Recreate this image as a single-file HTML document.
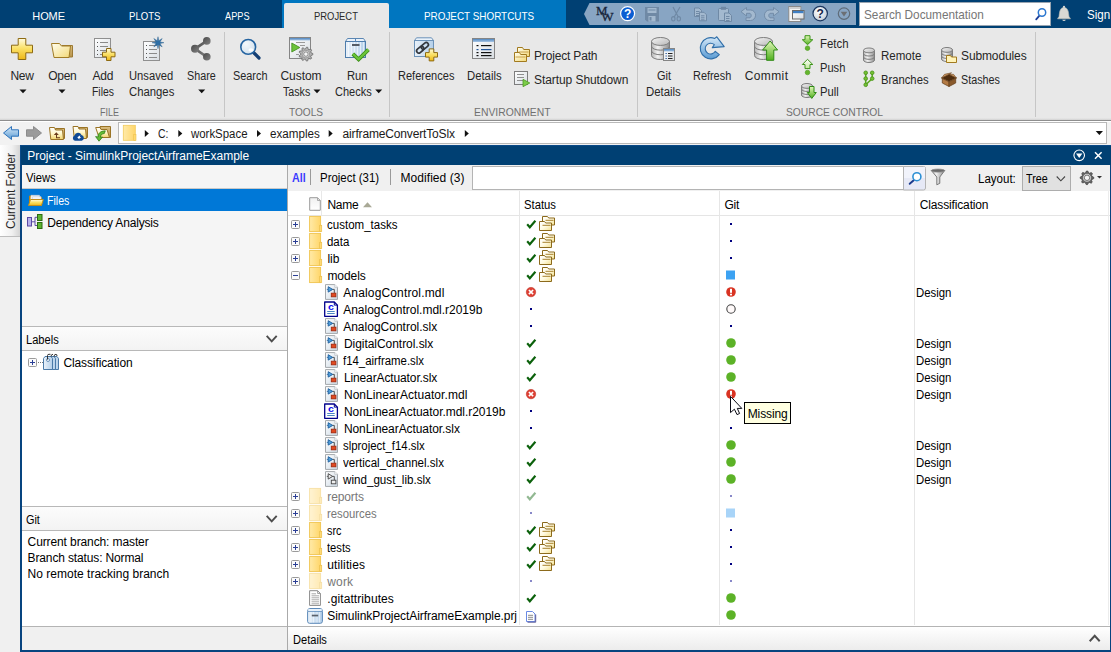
<!DOCTYPE html>
<html lang="en"><head><meta charset="utf-8"><title>Project - SimulinkProjectAirframeExample</title>
<style>
html,body{margin:0;padding:0}
body{width:1111px;height:652px;overflow:hidden;position:relative;background:#f0f0f0;font-family:"Liberation Sans",sans-serif;}
.b{position:absolute;box-sizing:border-box}
.x{position:absolute;transform-origin:0 50%;white-space:nowrap;line-height:16px;height:16px}
.i{position:absolute;overflow:visible}

.tab{font-size:11px;font-weight:400;color:#ffffff}
.tabsel{font-size:11px;font-weight:400;color:#2a2a2a}
.sdoc{font-size:13px;font-weight:400;color:#767676}
.sign{font-size:13px;font-weight:400;color:#ffffff}
.rb{font-size:12px;font-weight:400;color:#262626}
.sec{font-size:11px;font-weight:400;color:#707070}
.ad{font-size:12px;font-weight:400;color:#1a1a1a}
.ttl{font-size:12px;font-weight:400;color:#ffffff}
.t{font-size:12px;font-weight:400;color:#000000}
.tw{font-size:12px;font-weight:400;color:#ffffff}
.tg{font-size:12px;font-weight:400;color:#777777}
.all{font-size:12px;font-weight:700;color:#3a3aff}
.tip{font-size:12px;font-weight:400;color:#000000}
</style></head>
<body>
<div class="b" style="left:0;top:0;width:1111px;height:28px;background:#004073"></div>
<div class="b" style="left:282px;top:0;width:284px;height:28px;background:#0076c0"></div>
<div class="b" style="left:284px;top:3px;width:105px;height:25px;background:#e8e8e8;border-radius:2px 2px 0 0"></div>
<svg class="i" style="left:0;top:0" width="1111" height="28"><polygon points="584,14 589.500,3 856,3 856,25 589.500,25" fill="#88a5c3"/></svg>
<div class="b" style="left:859px;top:2px;width:192px;height:24px;background:#fff;border:1px solid #9aa5b1"></div>
<div class="b" style="left:0;top:28px;width:1111px;height:93px;background:linear-gradient(#e8e8e8 0,#e8e8e8 90px,#d2d2d2 92px);border-bottom:1px solid #8e8e8e"></div>
<div class="b" style="left:224px;top:32px;width:1px;height:85px;background:#c6c6c6"></div>
<div class="b" style="left:389px;top:32px;width:1px;height:85px;background:#c6c6c6"></div>
<div class="b" style="left:637px;top:32px;width:1px;height:85px;background:#c6c6c6"></div>
<div class="b" style="left:1035px;top:32px;width:1px;height:85px;background:#c6c6c6"></div>
<div class="b" style="left:0;top:121px;width:1111px;height:24px;background:#f2f2f2;border-top:1px solid #fff"></div>
<div class="b" style="left:118px;top:122px;width:989px;height:22px;background:#fff;border:1px solid #b9b9b9"></div>
<!-- current folder tab -->
<div class="b" style="left:0;top:145px;width:20px;height:92px;background:linear-gradient(90deg,#ffffff,#f0f0f0 60%,#d4d4d4);border-bottom:1px solid #bdbdbd"></div>
<div class="x rb" style="left:-30px;top:183px;width:82px;text-align:center;transform-origin:50% 50%;transform:rotate(-90deg) scaleX(.98);letter-spacing:0px">Current Folder</div>
<!-- panel -->
<div class="b" style="left:20px;top:145px;width:1092px;height:507px;background:#fff;border:2px solid #07447f;border-top:none"></div>
<div class="b" style="left:20px;top:145px;width:1091px;height:20px;background:#004073;border-top:1px solid #0a4a88;border-left:1px solid #0a4a88"></div>
<!-- left panel -->
<div class="b" style="left:22px;top:165px;width:265px;height:24px;background:#f5f5f5;border-bottom:1px solid #c8c8c8"></div>
<div class="b" style="left:22px;top:189px;width:265px;height:22px;background:#0078d7"></div>
<div class="b" style="left:22px;top:211px;width:265px;height:116px;background:#f5f5f5;border-bottom:1px solid #b8b8b8"></div>
<div class="b" style="left:22px;top:327px;width:265px;height:24px;background:linear-gradient(#fcfcfc,#f3f3f3);border-bottom:1px solid #b8b8b8"></div>
<div class="b" style="left:22px;top:506px;width:265px;height:25px;background:linear-gradient(#fcfcfc,#f3f3f3);border-top:1px solid #b8b8b8;border-bottom:1px solid #b8b8b8"></div>
<div class="b" style="left:22px;top:626px;width:265px;height:24px;background:#f0f0f0;border-top:1px solid #b4b4b4"></div>
<div class="b" style="left:287px;top:165px;width:1px;height:485px;background:#aaaaaa"></div>
<!-- right -->
<div class="b" style="left:288px;top:165px;width:822px;height:26px;background:#f0f0f0"></div>
<div class="b" style="left:472px;top:166px;width:432px;height:24px;background:#fff;border:1px solid #b4b4b4"></div>
<div class="b" style="left:288px;top:191px;width:822px;height:25px;background:#fff;border-bottom:1px solid #e5e5e5"></div>
<div class="b" style="left:321px;top:191px;width:1px;height:24px;background:#e8e8e8"></div>
<div class="b" style="left:310px;top:169px;width:1px;height:16px;background:#9a9a9a"></div>
<div class="b" style="left:390px;top:169px;width:1px;height:16px;background:#9a9a9a"></div>
<div class="b" style="left:519px;top:191px;width:1px;height:434px;background:#e6e6e6"></div>
<div class="b" style="left:719px;top:191px;width:1px;height:434px;background:#e6e6e6"></div>
<div class="b" style="left:914px;top:191px;width:1px;height:434px;background:#e6e6e6"></div>
<div class="b" style="left:288px;top:626px;width:822px;height:24px;background:linear-gradient(#fff,#ececec);border-top:1px solid #b4b4b4"></div>
<div class="b" style="left:1022px;top:166px;width:49px;height:25px;background:#e1e1e1;border:1px solid #adadad"></div>
<div class="b" style="left:1108px;top:191px;width:1px;height:434px;background:#ececec"></div>
<!-- tooltip -->
<div class="b" style="left:744px;top:402px;width:47px;height:22px;background:#ffffe1;border:1px solid #000"></div>

<svg class="i" style="left:0;top:0" width="1111" height="652" viewBox="0 0 1111 652"><defs>
<linearGradient id="gY" x1="0" y1="0" x2="0" y2="1"><stop offset="0" stop-color="#fffbe0"/><stop offset=".45" stop-color="#fbe26a"/><stop offset="1" stop-color="#eeb818"/></linearGradient>
<linearGradient id="gF" x1="0" y1="0" x2="1" y2="1"><stop offset="0" stop-color="#fffef0"/><stop offset="1" stop-color="#f3d977"/></linearGradient>
<linearGradient id="gFb" x1="0" y1="0" x2="0" y2="1"><stop offset="0" stop-color="#d9bd80"/><stop offset="1" stop-color="#b8934a"/></linearGradient>
<linearGradient id="gD" x1="0" y1="0" x2="1" y2="1"><stop offset="0" stop-color="#ffffff"/><stop offset="1" stop-color="#d8dde2"/></linearGradient>
<linearGradient id="gC" x1="0" y1="0" x2="1" y2="0"><stop offset="0" stop-color="#b5b5b5"/><stop offset=".35" stop-color="#f2f2f2"/><stop offset="1" stop-color="#8e8e8e"/></linearGradient>
<linearGradient id="gCt" x1="0" y1="0" x2="1" y2="1"><stop offset="0" stop-color="#f4f4f4"/><stop offset="1" stop-color="#b8b8b8"/></linearGradient>
<linearGradient id="gG" x1="0" y1="0" x2="0" y2="1"><stop offset="0" stop-color="#e2f7b8"/><stop offset="1" stop-color="#4fb01e"/></linearGradient>
<linearGradient id="gG2" x1="0" y1="0" x2="0" y2="1"><stop offset="0" stop-color="#ffffff"/><stop offset="1" stop-color="#bfe89a"/></linearGradient>
<linearGradient id="gF2" x1="0" y1="0" x2="1" y2="1"><stop offset="0" stop-color="#ffffff"/><stop offset=".5" stop-color="#fffbe4"/><stop offset="1" stop-color="#f3e08e"/></linearGradient>
<linearGradient id="gDw" x1="0" y1="0" x2="0" y2="1"><stop offset="0" stop-color="#f0f0f0"/><stop offset="1" stop-color="#ffffff"/></linearGradient>
<linearGradient id="gB" x1="0" y1="0" x2="0" y2="1"><stop offset="0" stop-color="#d6e9f8"/><stop offset="1" stop-color="#5b9bd3"/></linearGradient>
<linearGradient id="gT" x1="0" y1="0" x2="0" y2="1"><stop offset="0" stop-color="#4f86c0"/><stop offset="1" stop-color="#a9c6e4"/></linearGradient>
<linearGradient id="gBox" x1="0" y1="0" x2="1" y2="0"><stop offset="0" stop-color="#eaf2fa"/><stop offset="1" stop-color="#b4cfe9"/></linearGradient>
<linearGradient id="gS" x1="0" y1="0" x2="1" y2="1"><stop offset="0" stop-color="#4a4a4a"/><stop offset="1" stop-color="#828282"/></linearGradient>
<radialGradient id="gH" cx=".4" cy=".35" r=".7"><stop offset="0" stop-color="#ffffff"/><stop offset="1" stop-color="#c4ccd6"/></radialGradient>
<radialGradient id="gL" cx=".35" cy=".3" r=".8"><stop offset="0" stop-color="#f4f8fb"/><stop offset="1" stop-color="#cfdfec"/></radialGradient>
<linearGradient id="gDm" x1="0" y1="0" x2="1" y2="1"><stop offset="0" stop-color="#ffffff"/><stop offset="1" stop-color="#cfdbe6"/></linearGradient>
<linearGradient id="gFv" x1="0" y1="0" x2="0" y2="1"><stop offset="0" stop-color="#ffffff"/><stop offset=".5" stop-color="#fff7cc"/><stop offset="1" stop-color="#f1d46c"/></linearGradient>
<linearGradient id="gFo" x1="0" y1="0" x2="1" y2="0"><stop offset="0" stop-color="#ffeaa8"/><stop offset="1" stop-color="#ffd66a"/></linearGradient>
</defs>
<polygon points="18.2,38.5 25.8,38.5 25.8,45.2 32.5,45.2 32.5,52.8 25.8,52.8 25.8,59.5 18.2,59.5 18.2,52.8 11.5,52.8 11.5,45.2 18.2,45.2" fill="url(#gY)" stroke="#8d6a12" stroke-width="1" stroke-linejoin="round"/>
<path d="M62,45.5 H72.5 V57 H60 Z" fill="url(#gFb)" stroke="#9c7a34" stroke-width="1"/>
<path d="M51.5,43.5 H59.5 L61.5,46 H70.5 L69,57.5 H54 Z" fill="url(#gF)" stroke="#a07b25" stroke-width="1" stroke-linejoin="round"/>
<rect x="94.5" y="38.5" width="16.0" height="19.0" fill="url(#gD)" stroke="#8f8f8f" stroke-width="1"/>
<rect x="100" y="42.0" width="8" height="1" fill="#8a8a8a"/>
<rect x="97" y="42.0" width="1" height="1" fill="#555"/>
<rect x="100" y="46.0" width="8" height="1" fill="#8a8a8a"/>
<rect x="97" y="46.0" width="1" height="1" fill="#555"/>
<rect x="100" y="50.0" width="8" height="1" fill="#8a8a8a"/>
<rect x="97" y="50.0" width="1" height="1" fill="#555"/>
<rect x="100" y="54.0" width="8" height="1" fill="#8a8a8a"/>
<rect x="97" y="54.0" width="1" height="1" fill="#555"/>
<polygon points="106.5,48.5 111.0,48.5 111.0,52.2 115.0,52.2 115.0,56.8 111.0,56.8 111.0,60.5 106.5,60.5 106.5,56.8 102.5,56.8 102.5,52.2 106.5,52.2" fill="url(#gY)" stroke="#8d6a12" stroke-width="1" stroke-linejoin="round"/>
<rect x="143.5" y="41.5" width="16.0" height="19.0" fill="url(#gD)" stroke="#8f8f8f" stroke-width="1"/>
<rect x="149" y="45.0" width="8" height="1" fill="#8a8a8a"/>
<rect x="146" y="45.0" width="1" height="1" fill="#555"/>
<rect x="149" y="49.0" width="8" height="1" fill="#8a8a8a"/>
<rect x="146" y="49.0" width="1" height="1" fill="#555"/>
<rect x="149" y="53.0" width="8" height="1" fill="#8a8a8a"/>
<rect x="146" y="53.0" width="1" height="1" fill="#555"/>
<rect x="149" y="57.0" width="8" height="1" fill="#8a8a8a"/>
<rect x="146" y="57.0" width="1" height="1" fill="#555"/>
<polygon points="158.0,36.7 158.8,40.7 162.2,38.5 160.0,41.9 164.0,42.7 160.0,43.5 162.2,46.9 158.8,44.7 158.0,48.7 157.2,44.7 153.8,46.9 156.0,43.5 152.0,42.7 156.0,41.9 153.8,38.5 157.2,40.7" fill="#2f6fa6" stroke="#245a8a" stroke-width=".4"/>
<path d="M206.8,40.8 L195,48.8 L206.8,56.8" fill="none" stroke="url(#gS)" stroke-width="2.6"/>
<circle cx="195" cy="48.8" r="4" fill="url(#gS)"/><circle cx="206.8" cy="40.9" r="3.8" fill="url(#gS)"/><circle cx="206.8" cy="56.8" r="3.8" fill="url(#gS)"/>
<path d="M253.5,52.5 L259,58" stroke="#143f74" stroke-width="3.2" stroke-linecap="round"/>
<circle cx="248.2" cy="46.9" r="7.4" fill="url(#gL)" stroke="#2463a0" stroke-width="1.6"/>
<ellipse cx="251" cy="50" rx="2.6" ry="1.8" fill="#ffffff" opacity=".9"/>
<rect x="289.5" y="37.5" width="21.0" height="21.0" fill="url(#gD)" stroke="#858585" stroke-width="1"/>
<rect x="290.0" y="38.0" width="20.0" height="2.5" fill="url(#gT)"/>
<polygon points="291.8,43 291.8,52 299.8,47.5" fill="#6cc33a" stroke="#3d8a1c" stroke-width=".8"/>
<rect x="296" y="42" width="9" height="1" fill="#9a9a9a"/><rect x="300" y="45" width="5" height="1" fill="#9a9a9a"/><rect x="296" y="54" width="3" height="1" fill="#9a9a9a"/>
<polygon points="312.88,53.54 312.87,54.76 311.01,55.51 310.69,56.37 311.60,58.16 310.81,59.09 308.91,58.46 308.10,58.92 307.66,60.87 306.46,61.08 305.40,59.38 304.49,59.21 302.90,60.42 301.84,59.80 302.13,57.82 301.54,57.11 299.53,57.01 299.13,55.86 300.62,54.52 300.62,53.60 299.15,52.24 299.58,51.10 301.58,51.03 302.18,50.33 301.93,48.34 302.99,47.73 304.57,48.97 305.48,48.82 306.56,47.13 307.76,47.35 308.17,49.31 308.97,49.78 310.89,49.19 311.66,50.13 310.72,51.90 311.03,52.77" fill="#b4b4b4" stroke="#6a6a6a" stroke-width=".8" stroke-linejoin="round"/>
<circle cx="305.9" cy="54.1" r="3.8000000000000003" fill="#d9d9d9" stroke="#6a6a6a" stroke-width=".5"/>
<circle cx="305.9" cy="54.1" r="2.2" fill="#f4f4f4" stroke="#6a6a6a" stroke-width=".7"/>
<path d="M345.5,41.5 L347.5,38.5 H363.5 L365.5,41.5 Z" fill="#eaf2fa" stroke="#5b86b3" stroke-width="1" stroke-linejoin="round"/>
<rect x="345.500" y="41.5" width="20" height="16" fill="url(#gBox)" stroke="#4f7dac" stroke-width="1"/>
<rect x="348" y="42" width="1" height="15" fill="#ffffff" opacity=".55"/>
<rect x="351" y="42" width="1" height="15" fill="#ffffff" opacity=".55"/>
<rect x="354" y="42" width="1" height="15" fill="#ffffff" opacity=".55"/>
<rect x="357" y="42" width="1" height="15" fill="#ffffff" opacity=".55"/>
<rect x="360" y="42" width="1" height="15" fill="#ffffff" opacity=".55"/>
<rect x="363" y="42" width="1" height="15" fill="#ffffff" opacity=".55"/>
<rect x="355" y="38.5" width="1" height="3" fill="#5b86b3"/>
<rect x="352" y="44" width="7.500" height="2" fill="#555c66"/>
<path d="M352.8,53.8 L358.6,59.3 L368.4,49.6" fill="none" stroke="#3b8d18" stroke-width="3.900" stroke-linejoin="miter"/>
<path d="M352.8,53.8 L358.6,59.3 L368.4,49.6" fill="none" stroke="#6cc63a" stroke-width="2.200" stroke-linejoin="miter"/>
<path d="M414.500,40.500 L416.500,37.800 H431.500 L433.500,40.500 Z" fill="#eaf2fa" stroke="#6c92b8" stroke-width="1" stroke-linejoin="round"/>
<rect x="414.500" y="40.500" width="19" height="16" fill="url(#gBox)" stroke="#6c92b8" stroke-width="1"/>
<g transform="rotate(-40 422.5 47.8)" fill="none" stroke="#33373d" stroke-width="1.7"><rect x="415.500" y="45.600" width="8" height="4.400" rx="2.200"/><rect x="421.500" y="45.600" width="8" height="4.400" rx="2.200"/></g>
<polygon points="429.2,48.9 433.8,48.9 433.8,52.6 437.5,52.6 437.5,57.1 433.8,57.1 433.8,60.9 429.2,60.9 429.2,57.1 425.5,57.1 425.5,52.6 429.2,52.6" fill="url(#gY)" stroke="#8d6a12" stroke-width="1" stroke-linejoin="round"/>
<rect x="472.5" y="38.5" width="22.0" height="20.0" fill="url(#gD)" stroke="#858585" stroke-width="1"/>
<rect x="473.0" y="39.0" width="21.0" height="3" fill="url(#gT)"/>
<rect x="481" y="45" width="10.500" height="1.200" fill="#111"/><rect x="476.500" y="45" width="2" height="1.200" fill="#111"/>
<rect x="481" y="49" width="10.500" height="1.200" fill="#23569a"/><rect x="476.500" y="49" width="2" height="1.200" fill="#23569a"/>
<rect x="481" y="52" width="10.500" height="1.200" fill="#111"/><rect x="476.500" y="52" width="2" height="1.200" fill="#111"/>
<rect x="481" y="55" width="10.500" height="1.200" fill="#111"/><rect x="476.500" y="55" width="2" height="1.200" fill="#111"/>
<path d="M517.5,56.5 V47.5 H522.5 L523.7,49.5 H529.5 V56.5 Z" fill="url(#gF)" stroke="#a27a1f" stroke-width="1" stroke-linejoin="round"/>
<path d="M518.5,52.0 H528.5" stroke="#c9a24a" stroke-width="1"/>
<path d="M514.5,61.5 V52.5 H519.5 L520.7,54.5 H526.5 V61.5 Z" fill="url(#gF)" stroke="#a27a1f" stroke-width="1" stroke-linejoin="round"/>
<path d="M515.5,57.0 H525.5" stroke="#c9a24a" stroke-width="1"/>
<rect x="514.5" y="71.5" width="13.0" height="13.0" fill="url(#gD)" stroke="#7d7d7d" stroke-width="1"/>
<rect x="517" y="74.0" width="7" height="1" fill="#8f8f8f"/>
<rect x="517" y="77.0" width="7" height="1" fill="#8f8f8f"/>
<rect x="517" y="80.0" width="7" height="1" fill="#8f8f8f"/>
<polygon points="523,79.300 523,86.700 529.800,83" fill="#7ccc48" stroke="#4a9a22" stroke-width=".8"/>
<path d="M651.5,41.46 V55.54 A9.0,3.96 0 0 0 669.5,55.54 V41.46 Z" fill="url(#gC)" stroke="#7d7d7d" stroke-width="1"/>
<path d="M651.5,46.2 A9.0,3.96 0 0 0 669.5,46.2" fill="none" stroke="#7d7d7d" stroke-width="1"/>
<path d="M651.5,50.8 A9.0,3.96 0 0 0 669.5,50.8" fill="none" stroke="#7d7d7d" stroke-width="1"/>
<ellipse cx="660.5" cy="41.46" rx="9.0" ry="3.96" fill="url(#gCt)" stroke="#7d7d7d" stroke-width="1"/>
<rect x="663.5" y="48.5" width="11.0" height="12.0" fill="url(#gD)" stroke="#858585" stroke-width="1"/>
<rect x="664.0" y="49.0" width="10.0" height="2.5" fill="url(#gT)"/>
<rect x="668" y="53" width="4.500" height="1" fill="#222"/><rect x="665.5" y="53" width="1.300" height="1" fill="#23569a"/>
<rect x="668" y="55.5" width="4.500" height="1" fill="#222"/><rect x="665.5" y="55.5" width="1.300" height="1" fill="#23569a"/>
<rect x="668" y="58" width="4.500" height="1" fill="#222"/><rect x="665.5" y="58" width="1.300" height="1" fill="#23569a"/>
<path d="M719.300,54.600 A10.600,10.600 0 1 1 714.800,38.400 L716.800,36.800 L724.200,46.600 L712.300,47.600 L714.300,44.700 A5.400,5.400 0 1 0 715.300,51.300 Z" fill="url(#gB)" stroke="#2e6da8" stroke-width="1.100" stroke-linejoin="round"/>
<path d="M754.5,41.46 V55.54 A9.0,3.96 0 0 0 772.5,55.54 V41.46 Z" fill="url(#gC)" stroke="#7d7d7d" stroke-width="1"/>
<path d="M754.5,46.2 A9.0,3.96 0 0 0 772.5,46.2" fill="none" stroke="#7d7d7d" stroke-width="1"/>
<path d="M754.5,50.8 A9.0,3.96 0 0 0 772.5,50.8" fill="none" stroke="#7d7d7d" stroke-width="1"/>
<ellipse cx="763.5" cy="41.46" rx="9.0" ry="3.96" fill="url(#gCt)" stroke="#7d7d7d" stroke-width="1"/>
<path d="M770.100,41 L777.600,50 H773.800 V60.300 H766.600 V50 H762.600 Z" fill="url(#gG)" stroke="#2f8a16" stroke-width="1" stroke-linejoin="round"/>
<path d="M805,35.700 H810 V39.700 H812.800 L807.500,44.700 L802.300,39.700 H805 Z" fill="url(#gG)" stroke="#3d9418" stroke-width="1" stroke-linejoin="round"/>
<circle cx="807.5" cy="48.200" r="2.300" fill="#64b52c" stroke="#4b9a1e" stroke-width=".6"/>
<path d="M807.500,59.300 L812.800,64.500 H810 V68.600 H805 V64.500 H802.300 Z" fill="url(#gG2)" stroke="#3d9418" stroke-width="1" stroke-linejoin="round"/>
<circle cx="807.5" cy="72.500" r="2.300" fill="#64b52c" stroke="#4b9a1e" stroke-width=".6"/>
<path d="M801.5,85.92 V95.08 A5.5,2.42 0 0 0 812.5,95.08 V85.92 Z" fill="url(#gC)" stroke="#7d7d7d" stroke-width="1"/>
<path d="M801.5,89.0 A5.5,2.42 0 0 0 812.5,89.0" fill="none" stroke="#7d7d7d" stroke-width="1"/>
<path d="M801.5,92.0 A5.5,2.42 0 0 0 812.5,92.0" fill="none" stroke="#7d7d7d" stroke-width="1"/>
<ellipse cx="807.0" cy="85.92" rx="5.5" ry="2.42" fill="url(#gCt)" stroke="#7d7d7d" stroke-width="1"/>
<path d="M809.500,86.500 H814 V92.500 H816.300 L811.800,98.400 L807.300,92.500 H809.500 Z" fill="url(#gG)" stroke="#2f8a16" stroke-width="1" stroke-linejoin="round"/>
<path d="M863.5,50.42 V60.08 A5.5,2.42 0 0 0 874.5,60.08 V50.42 Z" fill="url(#gC)" stroke="#7d7d7d" stroke-width="1"/>
<path d="M863.5,53.6 A5.5,2.42 0 0 0 874.5,53.6" fill="none" stroke="#7d7d7d" stroke-width="1"/>
<path d="M863.5,56.9 A5.5,2.42 0 0 0 874.5,56.9" fill="none" stroke="#7d7d7d" stroke-width="1"/>
<ellipse cx="869.0" cy="50.42" rx="5.5" ry="2.42" fill="url(#gCt)" stroke="#7d7d7d" stroke-width="1"/>
<path d="M865.700,72.800 V84.800 M872.200,72.800 V78.600 L865.700,84.800" fill="none" stroke="#5aa821" stroke-width="1.500"/>
<circle cx="865.7" cy="72.8" r="1.800" fill="#74c034" stroke="#4c961c" stroke-width=".9"/>
<circle cx="872.2" cy="72.8" r="1.800" fill="#74c034" stroke="#4c961c" stroke-width=".9"/>
<circle cx="865.7" cy="78.6" r="1.800" fill="#74c034" stroke="#4c961c" stroke-width=".9"/>
<circle cx="872.2" cy="78.6" r="1.800" fill="#74c034" stroke="#4c961c" stroke-width=".9"/>
<circle cx="865.7" cy="84.8" r="1.800" fill="#74c034" stroke="#4c961c" stroke-width=".9"/>
<path d="M941.5,49.92 V59.08 A5.5,2.42 0 0 0 952.5,59.08 V49.92 Z" fill="url(#gC)" stroke="#7d7d7d" stroke-width="1"/>
<path d="M941.5,53.0 A5.5,2.42 0 0 0 952.5,53.0" fill="none" stroke="#7d7d7d" stroke-width="1"/>
<path d="M941.5,56.0 A5.5,2.42 0 0 0 952.5,56.0" fill="none" stroke="#7d7d7d" stroke-width="1"/>
<ellipse cx="947.0" cy="49.92" rx="5.5" ry="2.42" fill="url(#gCt)" stroke="#7d7d7d" stroke-width="1"/>
<path d="M946.500,62.500 V55.500 H950.500 L951.500,57 H956.500 V62.500 Z" fill="#fff3b8" stroke="#a27a1f" stroke-width="1" stroke-linejoin="round"/>
<path d="M941.500,78 L949,74.300 L956.500,78 L949,81.500 Z" fill="#4e2d0f" stroke="#6b4420" stroke-width=".8" stroke-linejoin="round"/>
<path d="M942.300,78.500 L949,81.800 V86.500 L942.300,83 Z" fill="#b37a44" stroke="#6b4420" stroke-width=".8" stroke-linejoin="round"/>
<path d="M955.700,78.500 L949,81.800 V86.500 L955.700,83 Z" fill="#8a5a2c" stroke="#6b4420" stroke-width=".8" stroke-linejoin="round"/>
<path d="M941.500,78 L944.500,74.300 L951.500,72.800 L949,74.300 Z M956.500,78 L953.500,74.300 L949,74.300 Z" fill="#c89662" stroke="#6b4420" stroke-width=".6" stroke-linejoin="round"/>
<polygon points="19.5,89.5 26.5,89.5 23.0,93.3" fill="#111"/>
<polygon points="58.5,89.5 65.5,89.5 62.0,93.3" fill="#111"/>
<polygon points="198.2,89.5 205.2,89.5 201.7,93.3" fill="#111"/>
<polygon points="313.5,89.5 320.5,89.5 317.0,93.3" fill="#111"/>
<polygon points="375.2,89.5 382.2,89.5 378.7,93.3" fill="#111"/>
<text x="596" y="14.600" font-family="Liberation Serif, serif" font-size="13" fill="#18263c" stroke="#18263c" stroke-width=".3">M</text>
<text x="601.300" y="21.300" font-family="Liberation Serif, serif" font-size="13" fill="#18263c" stroke="#18263c" stroke-width=".3">W</text>
<circle cx="627.600" cy="13.600" r="7" fill="#0b5ed2" stroke="#ffffff" stroke-width="1.200"/>
<text x="627.600" y="18" text-anchor="middle" font-family="Liberation Sans, sans-serif" font-size="12" font-weight="700" fill="#fff">?</text>
<path d="M645,7 H659 V21.500 H647 L645,19.500 Z" fill="#6f89a5"/>
<rect x="647.500" y="8" width="9" height="5" fill="#a3b9cf"/><rect x="648.500" y="16" width="7" height="5.500" fill="#a3b9cf"/><rect x="649.500" y="17" width="2" height="3.500" fill="#6f89a5"/>
<rect x="648.5" y="9.500" width="7" height="1" fill="#6f89a5"/>
<path d="M673,7 L678.300,17 M680,7 L674.200,17" stroke="#6f89a5" stroke-width="1.200" fill="none"/>
<ellipse cx="673.300" cy="18.800" rx="1.700" ry="2.200" fill="none" stroke="#6f89a5" stroke-width="1.100"/><ellipse cx="678.800" cy="18.800" rx="1.700" ry="2.200" fill="none" stroke="#6f89a5" stroke-width="1.100"/>
<path d="M694.5,8 H699.0 L701.5,10.5 V16.5 H694.5 Z" fill="#a3b9cf" stroke="#6f89a5" stroke-width="1"/>
<rect x="696.0" y="11" width="3.5" height="1" fill="#6f89a5"/>
<rect x="696.0" y="13" width="3.5" height="1" fill="#6f89a5"/>
<rect x="696.0" y="15" width="3.5" height="1" fill="#6f89a5"/>
<path d="M699.5,12.3 H704.0 L706.5,14.8 V20.8 H699.5 Z" fill="#a3b9cf" stroke="#6f89a5" stroke-width="1"/>
<rect x="701.0" y="15.3" width="3.5" height="1" fill="#6f89a5"/>
<rect x="701.0" y="17.3" width="3.5" height="1" fill="#6f89a5"/>
<rect x="701.0" y="19.3" width="3.5" height="1" fill="#6f89a5"/>
<rect x="718.500" y="8.500" width="10" height="12" rx="1" fill="#a3b9cf" stroke="#6f89a5" stroke-width="1"/>
<rect x="721" y="6.800" width="5" height="3" fill="#6f89a5"/>
<path d="M724.5,13 H729.0 L731.5,15.5 V21.5 H724.5 Z" fill="#a3b9cf" stroke="#6f89a5" stroke-width="1"/>
<rect x="726.0" y="16" width="3.5" height="1" fill="#6f89a5"/>
<rect x="726.0" y="18" width="3.5" height="1" fill="#6f89a5"/>
<rect x="726.0" y="20" width="3.5" height="1" fill="#6f89a5"/>
<path d="M741,11.700 L746.500,7.500 V10 H750.500 A5,5.200 0 0 1 750.500,20.500 H746 V17.800 H750 A2.500,2.600 0 0 0 750,13.300 H746.500 V16 Z" fill="#a3b9cf" stroke="#6f89a5" stroke-width=".9" stroke-linejoin="round"/>
<path d="M779,11.700 L773.500,7.500 V10 H769.500 A5,5.200 0 0 0 769.500,20.500 H774 V17.800 H770 A2.500,2.600 0 0 1 770,13.300 H773.500 V16 Z" fill="#a3b9cf" stroke="#6f89a5" stroke-width=".9" stroke-linejoin="round"/>
<rect x="788.800" y="6.500" width="12" height="15" fill="#f4f4f4" stroke="#8a8a8a" stroke-width="1"/>
<rect x="789.300" y="7" width="11" height="2" fill="#d0d0d0"/>
<rect x="792.500" y="10.500" width="11.500" height="8.500" fill="url(#gD)" stroke="#6a6a6a" stroke-width="1"/>
<rect x="793" y="11" width="10.500" height="2.200" fill="#3f7fc4"/>
<circle cx="820.200" cy="13.600" r="7.200" fill="url(#gH)" stroke="#1b3760" stroke-width="1.200"/>
<text x="820.200" y="18" text-anchor="middle" font-family="Liberation Sans, sans-serif" font-size="12" font-weight="700" fill="#16264a">?</text>
<circle cx="844" cy="13.600" r="5.700" fill="none" stroke="#5e6b78" stroke-width="1.200"/>
<polygon points="840.700,11.800 847.300,11.800 844,16.400" fill="#6b6f74"/>
<path d="M1039.200,15.800 L1036.200,19.300" stroke="#1d3f9a" stroke-width="1.800" stroke-linecap="round"/>
<circle cx="1042" cy="12.500" r="3.700" fill="#fff" stroke="#2b77d0" stroke-width="1.500"/>
<path d="M1064,7.500 C1068.500,7.500 1068.500,13 1069,16.500 L1070.500,18.800 H1057.500 L1059,16.500 C1059.500,13 1059.500,7.500 1064,7.500 Z" fill="#d9d9d4" stroke="#b8b8b0" stroke-width=".6"/>
<circle cx="1064" cy="6.900" r="1.100" fill="#d9d9d4"/><path d="M1062.200,19.800 A1.900,1.900 0 0 0 1065.800,19.800 Z" fill="#d9d9d4"/>
<polygon points="3.5,133.0 11.5,126.5 11.5,129.8 18.5,129.8 18.5,136.2 11.5,136.2 11.5,139.5" fill="url(#gB)" stroke="#2f74bb" stroke-width="1" stroke-linejoin="round"/>
<polygon points="41.5,133.0 33.5,126.5 33.5,129.8 26.5,129.8 26.5,136.2 33.5,136.2 33.5,139.5" fill="#9b9b9b" stroke="#8c8c8c" stroke-width="1" stroke-linejoin="round"/>
<path d="M55.5,128.5 H64.5 V138.5 H55.5 Z" fill="url(#gFb)" stroke="#9a7426" stroke-width="1" stroke-linejoin="round"/>
<path d="M49.5,127.5 H54.5 L55.5,130 H62.5 L63.5,139.5 H50.8 Z" fill="url(#gFv)" stroke="#9a7426" stroke-width="1" stroke-linejoin="round"/>
<path d="M56.300,132.300 L58.800,135 H57 V137.200 H60 V138.200 H56 V135 H53.800 Z" fill="#6a3c1c"/>
<path d="M79.0,127.5 H87.5 V137.5 H79.0 Z" fill="url(#gFb)" stroke="#9a7426" stroke-width="1" stroke-linejoin="round"/>
<path d="M73.0,126.5 H78.0 L79.0,129 H85.5 L86.5,138.5 H74.3 Z" fill="url(#gFv)" stroke="#9a7426" stroke-width="1" stroke-linejoin="round"/>
<path d="M75,140.800 A2.900,2.900 0 0 1 74.500,135.400 A3.700,3.700 0 0 1 81.500,135 A3,3 0 0 1 81.700,140.800 Z" fill="#0f4a96"/>
<path d="M77.300,137.300 L80.300,135.300 L79.900,136.800 L81.200,137.500 L79.600,138 L79.300,139.500 Z" fill="#fff"/>
<path d="M100,126.500 H110.500 V137.500 H103 Z" fill="url(#gFb)" stroke="#9a7426" stroke-width="1" stroke-linejoin="round"/>
<path d="M95.700,127.500 H100 L101,129.500 H107 L109.500,137.500 H99 Z" fill="url(#gFv)" stroke="#9a7426" stroke-width="1" stroke-linejoin="round"/>
<path d="M105.300,130.800 C100,131 97.800,133.800 98.200,137 L95.600,136.600 L99,141.200 L102.600,137 L100.400,137.200 C100.400,135.200 102,133.600 104.300,133.500 Z" fill="#62bb35" stroke="#2f7d18" stroke-width=".8" stroke-linejoin="round"/>
<rect x="123.300" y="125.300" width="12" height="15" fill="url(#gFo)" stroke="#f2cb5c" stroke-width=".8"/>
<rect x="133.700" y="134.500" width="2.300" height="6" fill="#ffd970" stroke="#eec24e" stroke-width=".6"/>
<polygon points="144.8,130.0 148.8,133.5 144.8,137.0" fill="#111"/>
<polygon points="178.3,130.0 182.3,133.5 178.3,137.0" fill="#111"/>
<polygon points="257,130.0 261,133.5 257,137.0" fill="#111"/>
<polygon points="328.7,130.0 332.7,133.5 328.7,137.0" fill="#111"/>
<polygon points="464.8,130.0 468.8,133.5 464.8,137.0" fill="#111"/>
<polygon points="1095.700,131 1103,131 1099.350,135" fill="#111"/>
<circle cx="1079.200" cy="155.300" r="5.300" fill="none" stroke="#fff" stroke-width="1.100"/>
<polygon points="1076,153.500 1082.400,153.500 1079.200,158" fill="#fff"/>
<path d="M1095,152.200 L1101.600,158.800 M1101.600,152.200 L1095,158.800" stroke="#fff" stroke-width="1.500"/>
<path d="M29.500,205.500 V196 H33 L34.500,197.500 H41.500 V205.500 Z" fill="#e8b33a" stroke="#b88418" stroke-width="1" stroke-linejoin="round"/>
<path d="M31,204 V195.300 H39.500 V204 Z" fill="#ffffff" stroke="#c8ccd4" stroke-width=".6"/><path d="M32.500,204 V196.600 H41 V204 Z" fill="#f2f4f8" stroke="#c8ccd4" stroke-width=".6"/>
<path d="M28.500,205.500 L30.500,199.500 H43.300 L41.500,205.500 Z" fill="url(#gY)" stroke="#c08e1c" stroke-width="1" stroke-linejoin="round"/>
<rect x="27.500" y="217.500" width="4" height="8.500" fill="#b7b0ea" stroke="#5b4aa6" stroke-width="1"/>
<path d="M32,221.800 H35 M35,217.300 V225.500 M35,217.300 H37 M35,225.500 H37" stroke="#5b4aa6" stroke-width="1" fill="none"/>
<rect x="37.500" y="214.500" width="4.500" height="6" fill="#5db531" stroke="#2c6b12" stroke-width="1"/><rect x="37.500" y="222.500" width="4.500" height="6" fill="#5db531" stroke="#2c6b12" stroke-width="1"/>
<path d="M266.7,335.85 L271.7,341.35 L276.7,335.85" fill="none" stroke="#4d4d4d" stroke-width="1.9"/>
<path d="M266.7,515.95 L271.7,521.45 L276.7,515.95" fill="none" stroke="#4d4d4d" stroke-width="1.9"/>
<path d="M1089.7,641.25 L1094.7,635.75 L1099.7,641.25" fill="none" stroke="#4d4d4d" stroke-width="1.9"/>
<rect x="28.5" y="358.5" width="8" height="8" rx="1" fill="#fbfbfb" stroke="#9b9b9b" stroke-width="1"/>
<rect x="30" y="362" width="5" height="1" fill="#2b3f96"/>
<rect x="32" y="360" width="1" height="5" fill="#2b3f96"/>
<path d="M38,362.500 H43" stroke="#777" stroke-width="1" stroke-dasharray="1,1"/>
<path d="M49.5,369.5 V358.5 L51.0,356.5 H57.0 L58.5,358.5 V369.5 Z" fill="url(#gBox)" stroke="#4b7aa8" stroke-width="1" stroke-linejoin="round"/>
<path d="M46.5,369.5 V358.5 L48.0,356.5 H54.0 L55.5,358.5 V369.5 Z" fill="url(#gBox)" stroke="#4b7aa8" stroke-width="1" stroke-linejoin="round"/>
<path d="M43.5,369.5 V358.5 L45.0,356.5 H51.0 L52.5,358.5 V369.5 Z" fill="url(#gBox)" stroke="#4b7aa8" stroke-width="1" stroke-linejoin="round"/>
<circle cx="48" cy="360" r="1.500" fill="#fff" stroke="#4b7aa8" stroke-width=".8"/>
<path d="M47.500,359.500 V355.500 Q47.500,354.300 49,354.300 H50.500 M51,356.500 Q51,354.300 53,354.300 M54,356.500 Q54,354.300 56,354.300 Q57,354.300 57,356" fill="none" stroke="#222" stroke-width=".9"/>
<path d="M903.500,166.500 H923.500 Q925.500,166.500 925.500,168.500 V188 Q925.500,190 923.500,190 H903.500 Z" fill="#e6e9f6" stroke="#b4b4b4" stroke-width="1"/>
<rect x="904" y="167" width="21" height="11" fill="#f1f3fb"/>
<path d="M914,180 L909.700,183.800" stroke="#1b3b8e" stroke-width="1.900" stroke-linecap="round"/>
<circle cx="916.900" cy="176.700" r="4" fill="#fff" stroke="#2b8fd4" stroke-width="1.600"/>
<path d="M931.300,170.500 L936.800,177 V184.800 L939.800,183.300 V177 L944.700,170.500 Z" fill="url(#gC)" stroke="#6e6e6e" stroke-width=".9" stroke-linejoin="round"/>
<ellipse cx="938" cy="170.600" rx="6.700" ry="1.500" fill="#6a6a6a" stroke="#8a8a8a" stroke-width=".8"/>
<path d="M1056.700,176.500 L1060.850,180.800 L1065,176.500" fill="none" stroke="#444" stroke-width="1.100"/>
<polygon points="1093.78,177.26 1093.75,178.59 1091.95,179.40 1091.54,180.33 1092.18,182.21 1091.22,183.13 1089.37,182.43 1088.42,182.80 1087.54,184.58 1086.21,184.55 1085.40,182.75 1084.47,182.34 1082.59,182.98 1081.67,182.02 1082.37,180.17 1082.00,179.22 1080.22,178.34 1080.25,177.01 1082.05,176.20 1082.46,175.27 1081.82,173.39 1082.78,172.47 1084.63,173.17 1085.58,172.80 1086.46,171.02 1087.79,171.05 1088.60,172.85 1089.53,173.26 1091.41,172.62 1092.33,173.58 1091.63,175.43 1092.00,176.38" fill="#666666" stroke="#454545" stroke-width=".8" stroke-linejoin="round"/>
<circle cx="1087" cy="177.8" r="4.300000000000001" fill="#d9d9d9" stroke="#454545" stroke-width=".5"/>
<circle cx="1087" cy="177.8" r="2.7" fill="#f4f4f4" stroke="#454545" stroke-width=".7"/>
<polygon points="1097,176 1102,176 1099.500,178.600" fill="#333"/>
<path d="M309.700,197.700 H317.500 L320.300,200.500 V210.300 H309.700 Z" fill="url(#gDw)" stroke="#9a9a9a" stroke-width="1" stroke-linejoin="miter"/><path d="M317.500,197.700 V200.500 H320.300" fill="none" stroke="#9a9a9a" stroke-width=".8"/>
<polygon points="363,207.300 372,207.300 367.500,202.300" fill="#a9a996"/>
<g><rect x="309.600" y="216.4" width="11" height="15.200" fill="url(#gFo)" stroke="#f0c44e" stroke-width=".9"/><rect x="319.700" y="225.3" width="2" height="6.300" fill="#ffdb78" stroke="#ecbe48" stroke-width=".7"/></g>
<rect x="291.5" y="220.5" width="8" height="8" rx="1" fill="#fbfbfb" stroke="#9b9b9b" stroke-width="1"/>
<rect x="293" y="224" width="5" height="1" fill="#2b3f96"/>
<rect x="295" y="222" width="1" height="5" fill="#2b3f96"/>
<path d="M527.200,224.3 L529.800,227.3 L535.400,220.7" fill="none" stroke="#0b610b" stroke-width="2.100"/>
<path d="M542.5,225 V216.5 H547.5 L548.7,218.0 H554.5 V225 Z" fill="url(#gF2)" stroke="#8c6a1c" stroke-width="1" stroke-linejoin="round"/>
<path d="M545.5,220.3 H553.5" stroke="#a8822e" stroke-width="1"/>
<path d="M539.5,230.5 V221.5 H544.5 L545.7,223.0 H551.5 V230.5 Z" fill="url(#gF2)" stroke="#8c6a1c" stroke-width="1" stroke-linejoin="round"/>
<path d="M542.5,225.3 H550.5" stroke="#a8822e" stroke-width="1"/>
<rect x="730" y="223" width="2" height="2" fill="#000080"/>
<g><rect x="309.600" y="233.4" width="11" height="15.200" fill="url(#gFo)" stroke="#f0c44e" stroke-width=".9"/><rect x="319.700" y="242.3" width="2" height="6.300" fill="#ffdb78" stroke="#ecbe48" stroke-width=".7"/></g>
<rect x="291.5" y="237.5" width="8" height="8" rx="1" fill="#fbfbfb" stroke="#9b9b9b" stroke-width="1"/>
<rect x="293" y="241" width="5" height="1" fill="#2b3f96"/>
<rect x="295" y="239" width="1" height="5" fill="#2b3f96"/>
<path d="M527.200,241.3 L529.800,244.3 L535.400,237.7" fill="none" stroke="#0b610b" stroke-width="2.100"/>
<path d="M542.5,242 V233.5 H547.5 L548.7,235.0 H554.5 V242 Z" fill="url(#gF2)" stroke="#8c6a1c" stroke-width="1" stroke-linejoin="round"/>
<path d="M545.5,237.3 H553.5" stroke="#a8822e" stroke-width="1"/>
<path d="M539.5,247.5 V238.5 H544.5 L545.7,240.0 H551.5 V247.5 Z" fill="url(#gF2)" stroke="#8c6a1c" stroke-width="1" stroke-linejoin="round"/>
<path d="M542.5,242.3 H550.5" stroke="#a8822e" stroke-width="1"/>
<rect x="730" y="240" width="2" height="2" fill="#000080"/>
<g><rect x="309.600" y="250.4" width="11" height="15.200" fill="url(#gFo)" stroke="#f0c44e" stroke-width=".9"/><rect x="319.700" y="259.3" width="2" height="6.300" fill="#ffdb78" stroke="#ecbe48" stroke-width=".7"/></g>
<rect x="291.5" y="254.5" width="8" height="8" rx="1" fill="#fbfbfb" stroke="#9b9b9b" stroke-width="1"/>
<rect x="293" y="258" width="5" height="1" fill="#2b3f96"/>
<rect x="295" y="256" width="1" height="5" fill="#2b3f96"/>
<path d="M527.200,258.3 L529.800,261.3 L535.400,254.7" fill="none" stroke="#0b610b" stroke-width="2.100"/>
<path d="M542.5,259 V250.5 H547.5 L548.7,252.0 H554.5 V259 Z" fill="url(#gF2)" stroke="#8c6a1c" stroke-width="1" stroke-linejoin="round"/>
<path d="M545.5,254.3 H553.5" stroke="#a8822e" stroke-width="1"/>
<path d="M539.5,264.5 V255.5 H544.5 L545.7,257.0 H551.5 V264.5 Z" fill="url(#gF2)" stroke="#8c6a1c" stroke-width="1" stroke-linejoin="round"/>
<path d="M542.5,259.3 H550.5" stroke="#a8822e" stroke-width="1"/>
<rect x="730" y="257" width="2" height="2" fill="#000080"/>
<g><rect x="309.600" y="267.4" width="11" height="15.200" fill="url(#gFo)" stroke="#f0c44e" stroke-width=".9"/><rect x="319.700" y="276.3" width="2" height="6.300" fill="#ffdb78" stroke="#ecbe48" stroke-width=".7"/></g>
<rect x="291.5" y="271.5" width="8" height="8" rx="1" fill="#fbfbfb" stroke="#9b9b9b" stroke-width="1"/>
<rect x="293" y="275" width="5" height="1" fill="#2b3f96"/>
<path d="M527.200,275.3 L529.800,278.3 L535.400,271.7" fill="none" stroke="#0b610b" stroke-width="2.100"/>
<path d="M542.5,276 V267.5 H547.5 L548.7,269.0 H554.5 V276 Z" fill="url(#gF2)" stroke="#8c6a1c" stroke-width="1" stroke-linejoin="round"/>
<path d="M545.5,271.3 H553.5" stroke="#a8822e" stroke-width="1"/>
<path d="M539.5,281.5 V272.5 H544.5 L545.7,274.0 H551.5 V281.5 Z" fill="url(#gF2)" stroke="#8c6a1c" stroke-width="1" stroke-linejoin="round"/>
<path d="M542.5,276.3 H550.5" stroke="#a8822e" stroke-width="1"/>
<rect x="726" y="270.5" width="9" height="9" fill="#3ca2f2"/>
<path d="M325.500,284.6 H334.800 L337.500,287.3 V299.4 H325.500 Z" fill="url(#gDm)" stroke="#a4a8ac" stroke-width="1" stroke-linejoin="round"/>
<path d="M334.800,284.6 V287.3 H337.500" fill="#fff" stroke="#b4b8bc" stroke-width=".7"/>
<path d="M332.500,289.4 H334.300 V293" fill="none" stroke="#444" stroke-width=".9"/>
<polygon points="328.200,286.7 328.200,292.1 332.700,289.4" fill="#4fa0dc" stroke="#1c5c9c" stroke-width=".9" stroke-linejoin="round"/>
<path d="M326.800,289.4 H328" stroke="#1c5c9c" stroke-width=".8"/>
<rect x="331.300" y="293.2" width="4.600" height="3.600" fill="#e2491f" stroke="#a3290f" stroke-width=".9"/>
<circle cx="531" cy="292.1" r="4.700" fill="#de4034" stroke="#c03024" stroke-width=".6"/>
<path d="M528.900,290 L533.100,294.2 M533.100,290 L528.900,294.2" stroke="#fff" stroke-width="1.700"/>
<circle cx="731" cy="292" r="4.800" fill="#d93322"/>
<rect x="730" y="288.8" width="2" height="4" fill="#fff"/><rect x="730" y="293.7" width="2" height="1.700" fill="#fff"/>
<path d="M324.700,302 H334.300 L337.400,305.1 V316.3 H324.700 Z" fill="#fff" stroke="#00008b" stroke-width="1.300" stroke-linejoin="round"/>
<path d="M334.300,302 V305.1 H337.400" fill="none" stroke="#00008b" stroke-width="1"/>
<text x="331" y="310.2" text-anchor="middle" font-family="Liberation Sans, sans-serif" font-size="8.500" font-weight="700" fill="#0a0af0" transform="translate(331 0) scale(1.25 1) translate(-331 0)">c</text>
<rect x="327.200" y="311" width="7.500" height="1" fill="#4a86c2"/><rect x="327.200" y="313" width="7.500" height="1" fill="#4a86c2"/>
<rect x="530" y="308" width="2" height="2" fill="#000080"/>
<circle cx="731" cy="309" r="4.200" fill="#fffafa" stroke="#444" stroke-width="1.100"/>
<path d="M325.500,318.6 H334.800 L337.500,321.3 V333.4 H325.500 Z" fill="url(#gDm)" stroke="#a4a8ac" stroke-width="1" stroke-linejoin="round"/>
<path d="M334.800,318.6 V321.3 H337.500" fill="#fff" stroke="#b4b8bc" stroke-width=".7"/>
<path d="M332.500,323.4 H334.300 V327" fill="none" stroke="#444" stroke-width=".9"/>
<polygon points="328.200,320.7 328.200,326.1 332.700,323.4" fill="#4fa0dc" stroke="#1c5c9c" stroke-width=".9" stroke-linejoin="round"/>
<path d="M326.800,323.4 H328" stroke="#1c5c9c" stroke-width=".8"/>
<rect x="331.300" y="327.2" width="4.600" height="3.600" fill="#e2491f" stroke="#a3290f" stroke-width=".9"/>
<rect x="530" y="325" width="2" height="2" fill="#000080"/>
<rect x="730" y="325" width="2" height="2" fill="#000080"/>
<path d="M325.500,335.6 H334.800 L337.500,338.3 V350.4 H325.500 Z" fill="url(#gDm)" stroke="#a4a8ac" stroke-width="1" stroke-linejoin="round"/>
<path d="M334.800,335.6 V338.3 H337.500" fill="#fff" stroke="#b4b8bc" stroke-width=".7"/>
<path d="M332.500,340.4 H334.300 V344" fill="none" stroke="#444" stroke-width=".9"/>
<polygon points="328.200,337.7 328.200,343.1 332.700,340.4" fill="#4fa0dc" stroke="#1c5c9c" stroke-width=".9" stroke-linejoin="round"/>
<path d="M326.800,340.4 H328" stroke="#1c5c9c" stroke-width=".8"/>
<rect x="331.300" y="344.2" width="4.600" height="3.600" fill="#e2491f" stroke="#a3290f" stroke-width=".9"/>
<path d="M527.200,343.3 L529.800,346.3 L535.400,339.7" fill="none" stroke="#0b610b" stroke-width="2.100"/>
<circle cx="731" cy="343" r="4.800" fill="#5cb227"/>
<path d="M325.500,352.6 H334.800 L337.500,355.3 V367.4 H325.500 Z" fill="url(#gDm)" stroke="#a4a8ac" stroke-width="1" stroke-linejoin="round"/>
<path d="M334.800,352.6 V355.3 H337.500" fill="#fff" stroke="#b4b8bc" stroke-width=".7"/>
<path d="M332.500,357.4 H334.300 V361" fill="none" stroke="#444" stroke-width=".9"/>
<polygon points="328.200,354.7 328.200,360.1 332.700,357.4" fill="#4fa0dc" stroke="#1c5c9c" stroke-width=".9" stroke-linejoin="round"/>
<path d="M326.800,357.4 H328" stroke="#1c5c9c" stroke-width=".8"/>
<rect x="331.300" y="361.2" width="4.600" height="3.600" fill="#e2491f" stroke="#a3290f" stroke-width=".9"/>
<path d="M527.200,360.3 L529.800,363.3 L535.400,356.7" fill="none" stroke="#0b610b" stroke-width="2.100"/>
<circle cx="731" cy="360" r="4.800" fill="#5cb227"/>
<path d="M325.500,369.6 H334.800 L337.500,372.3 V384.4 H325.500 Z" fill="url(#gDm)" stroke="#a4a8ac" stroke-width="1" stroke-linejoin="round"/>
<path d="M334.800,369.6 V372.3 H337.500" fill="#fff" stroke="#b4b8bc" stroke-width=".7"/>
<path d="M332.500,374.4 H334.300 V378" fill="none" stroke="#444" stroke-width=".9"/>
<polygon points="328.200,371.7 328.200,377.1 332.700,374.4" fill="#4fa0dc" stroke="#1c5c9c" stroke-width=".9" stroke-linejoin="round"/>
<path d="M326.800,374.4 H328" stroke="#1c5c9c" stroke-width=".8"/>
<rect x="331.300" y="378.2" width="4.600" height="3.600" fill="#e2491f" stroke="#a3290f" stroke-width=".9"/>
<path d="M527.200,377.3 L529.800,380.3 L535.400,373.7" fill="none" stroke="#0b610b" stroke-width="2.100"/>
<circle cx="731" cy="377" r="4.800" fill="#5cb227"/>
<path d="M325.500,386.6 H334.800 L337.500,389.3 V401.4 H325.500 Z" fill="url(#gDm)" stroke="#a4a8ac" stroke-width="1" stroke-linejoin="round"/>
<path d="M334.800,386.6 V389.3 H337.500" fill="#fff" stroke="#b4b8bc" stroke-width=".7"/>
<path d="M332.500,391.4 H334.300 V395" fill="none" stroke="#444" stroke-width=".9"/>
<polygon points="328.200,388.7 328.200,394.1 332.700,391.4" fill="#4fa0dc" stroke="#1c5c9c" stroke-width=".9" stroke-linejoin="round"/>
<path d="M326.800,391.4 H328" stroke="#1c5c9c" stroke-width=".8"/>
<rect x="331.300" y="395.2" width="4.600" height="3.600" fill="#e2491f" stroke="#a3290f" stroke-width=".9"/>
<circle cx="531" cy="394.1" r="4.700" fill="#de4034" stroke="#c03024" stroke-width=".6"/>
<path d="M528.900,392 L533.100,396.2 M533.100,392 L528.900,396.2" stroke="#fff" stroke-width="1.700"/>
<circle cx="731" cy="394" r="4.800" fill="#d93322"/>
<rect x="730" y="390.8" width="2" height="4" fill="#fff"/><rect x="730" y="395.7" width="2" height="1.700" fill="#fff"/>
<path d="M324.700,404 H334.300 L337.400,407.1 V418.3 H324.700 Z" fill="#fff" stroke="#00008b" stroke-width="1.300" stroke-linejoin="round"/>
<path d="M334.300,404 V407.1 H337.400" fill="none" stroke="#00008b" stroke-width="1"/>
<text x="331" y="412.2" text-anchor="middle" font-family="Liberation Sans, sans-serif" font-size="8.500" font-weight="700" fill="#0a0af0" transform="translate(331 0) scale(1.25 1) translate(-331 0)">c</text>
<rect x="327.200" y="413" width="7.500" height="1" fill="#4a86c2"/><rect x="327.200" y="415" width="7.500" height="1" fill="#4a86c2"/>
<rect x="530" y="410" width="2" height="2" fill="#000080"/>
<path d="M325.500,420.6 H334.800 L337.500,423.3 V435.4 H325.500 Z" fill="url(#gDm)" stroke="#a4a8ac" stroke-width="1" stroke-linejoin="round"/>
<path d="M334.800,420.6 V423.3 H337.500" fill="#fff" stroke="#b4b8bc" stroke-width=".7"/>
<path d="M332.500,425.4 H334.300 V429" fill="none" stroke="#444" stroke-width=".9"/>
<polygon points="328.200,422.7 328.200,428.1 332.700,425.4" fill="#4fa0dc" stroke="#1c5c9c" stroke-width=".9" stroke-linejoin="round"/>
<path d="M326.800,425.4 H328" stroke="#1c5c9c" stroke-width=".8"/>
<rect x="331.300" y="429.2" width="4.600" height="3.600" fill="#e2491f" stroke="#a3290f" stroke-width=".9"/>
<rect x="530" y="427" width="2" height="2" fill="#000080"/>
<rect x="730" y="427" width="2" height="2" fill="#000080"/>
<path d="M325.500,437.6 H334.800 L337.500,440.3 V452.4 H325.500 Z" fill="url(#gDm)" stroke="#a4a8ac" stroke-width="1" stroke-linejoin="round"/>
<path d="M334.800,437.6 V440.3 H337.500" fill="#fff" stroke="#b4b8bc" stroke-width=".7"/>
<path d="M332.500,442.4 H334.300 V446" fill="none" stroke="#444" stroke-width=".9"/>
<polygon points="328.200,439.7 328.200,445.1 332.700,442.4" fill="#4fa0dc" stroke="#1c5c9c" stroke-width=".9" stroke-linejoin="round"/>
<path d="M326.800,442.4 H328" stroke="#1c5c9c" stroke-width=".8"/>
<rect x="331.300" y="446.2" width="4.600" height="3.600" fill="#e2491f" stroke="#a3290f" stroke-width=".9"/>
<path d="M527.200,445.3 L529.800,448.3 L535.400,441.7" fill="none" stroke="#0b610b" stroke-width="2.100"/>
<circle cx="731" cy="445" r="4.800" fill="#5cb227"/>
<path d="M325.500,454.6 H334.800 L337.500,457.3 V469.4 H325.500 Z" fill="url(#gDm)" stroke="#a4a8ac" stroke-width="1" stroke-linejoin="round"/>
<path d="M334.800,454.6 V457.3 H337.500" fill="#fff" stroke="#b4b8bc" stroke-width=".7"/>
<path d="M332.500,459.4 H334.300 V463" fill="none" stroke="#444" stroke-width=".9"/>
<polygon points="328.200,456.7 328.200,462.1 332.700,459.4" fill="#4fa0dc" stroke="#1c5c9c" stroke-width=".9" stroke-linejoin="round"/>
<path d="M326.800,459.4 H328" stroke="#1c5c9c" stroke-width=".8"/>
<rect x="331.300" y="463.2" width="4.600" height="3.600" fill="#e2491f" stroke="#a3290f" stroke-width=".9"/>
<path d="M527.200,462.3 L529.800,465.3 L535.400,458.7" fill="none" stroke="#0b610b" stroke-width="2.100"/>
<circle cx="731" cy="462" r="4.800" fill="#5cb227"/>
<path d="M325.500,471.6 H334.800 L337.500,474.3 V486.4 H325.500 Z" fill="url(#gDm)" stroke="#a4a8ac" stroke-width="1" stroke-linejoin="round"/>
<path d="M334.800,471.6 V474.3 H337.500" fill="#fff" stroke="#b4b8bc" stroke-width=".7"/>
<path d="M332.500,476.4 H334.300 V480" fill="none" stroke="#444" stroke-width=".9"/>
<polygon points="328.200,473.7 328.200,479.1 332.700,476.4" fill="#e8e8e8" stroke="#444" stroke-width=".9" stroke-linejoin="round"/>
<path d="M326.800,476.4 H328" stroke="#444" stroke-width=".8"/>
<rect x="331.300" y="480.2" width="4.600" height="3.600" fill="#f0f0f0" stroke="#444" stroke-width=".9"/>
<path d="M527.200,479.3 L529.800,482.3 L535.400,475.7" fill="none" stroke="#0b610b" stroke-width="2.100"/>
<circle cx="731" cy="479" r="4.800" fill="#5cb227"/>
<g opacity=".5"><rect x="309.600" y="488.4" width="11" height="15.200" fill="url(#gFo)" stroke="#f0c44e" stroke-width=".9"/><rect x="319.700" y="497.3" width="2" height="6.300" fill="#ffdb78" stroke="#ecbe48" stroke-width=".7"/></g>
<rect x="291.5" y="492.5" width="8" height="8" rx="1" fill="#fbfbfb" stroke="#9b9b9b" stroke-width="1"/>
<rect x="293" y="496" width="5" height="1" fill="#2b3f96"/>
<rect x="295" y="494" width="1" height="5" fill="#2b3f96"/>
<path d="M527.200,496.3 L529.800,499.3 L535.400,492.7" fill="none" stroke="#0b610b" stroke-width="2.100" opacity=".45"/>
<rect x="730" y="495" width="2" height="2" fill="#8888c8"/>
<g opacity=".5"><rect x="309.600" y="505.4" width="11" height="15.200" fill="url(#gFo)" stroke="#f0c44e" stroke-width=".9"/><rect x="319.700" y="514.3" width="2" height="6.300" fill="#ffdb78" stroke="#ecbe48" stroke-width=".7"/></g>
<rect x="291.5" y="509.5" width="8" height="8" rx="1" fill="#fbfbfb" stroke="#9b9b9b" stroke-width="1"/>
<rect x="293" y="513" width="5" height="1" fill="#2b3f96"/>
<rect x="295" y="511" width="1" height="5" fill="#2b3f96"/>
<rect x="530" y="512" width="2" height="2" fill="#8888c8"/>
<rect x="726" y="508.5" width="9" height="9" fill="#a8d4f8"/>
<g><rect x="309.600" y="522.4" width="11" height="15.200" fill="url(#gFo)" stroke="#f0c44e" stroke-width=".9"/><rect x="319.700" y="531.3" width="2" height="6.300" fill="#ffdb78" stroke="#ecbe48" stroke-width=".7"/></g>
<rect x="291.5" y="526.5" width="8" height="8" rx="1" fill="#fbfbfb" stroke="#9b9b9b" stroke-width="1"/>
<rect x="293" y="530" width="5" height="1" fill="#2b3f96"/>
<rect x="295" y="528" width="1" height="5" fill="#2b3f96"/>
<path d="M527.200,530.3 L529.800,533.3 L535.400,526.7" fill="none" stroke="#0b610b" stroke-width="2.100"/>
<path d="M542.5,531 V522.5 H547.5 L548.7,524.0 H554.5 V531 Z" fill="url(#gF2)" stroke="#8c6a1c" stroke-width="1" stroke-linejoin="round"/>
<path d="M545.5,526.3 H553.5" stroke="#a8822e" stroke-width="1"/>
<path d="M539.5,536.5 V527.5 H544.5 L545.7,529.0 H551.5 V536.5 Z" fill="url(#gF2)" stroke="#8c6a1c" stroke-width="1" stroke-linejoin="round"/>
<path d="M542.5,531.3 H550.5" stroke="#a8822e" stroke-width="1"/>
<rect x="730" y="529" width="2" height="2" fill="#000080"/>
<g><rect x="309.600" y="539.4" width="11" height="15.200" fill="url(#gFo)" stroke="#f0c44e" stroke-width=".9"/><rect x="319.700" y="548.3" width="2" height="6.300" fill="#ffdb78" stroke="#ecbe48" stroke-width=".7"/></g>
<rect x="291.5" y="543.5" width="8" height="8" rx="1" fill="#fbfbfb" stroke="#9b9b9b" stroke-width="1"/>
<rect x="293" y="547" width="5" height="1" fill="#2b3f96"/>
<rect x="295" y="545" width="1" height="5" fill="#2b3f96"/>
<path d="M527.200,547.3 L529.800,550.3 L535.400,543.7" fill="none" stroke="#0b610b" stroke-width="2.100"/>
<path d="M542.5,548 V539.5 H547.5 L548.7,541.0 H554.5 V548 Z" fill="url(#gF2)" stroke="#8c6a1c" stroke-width="1" stroke-linejoin="round"/>
<path d="M545.5,543.3 H553.5" stroke="#a8822e" stroke-width="1"/>
<path d="M539.5,553.5 V544.5 H544.5 L545.7,546.0 H551.5 V553.5 Z" fill="url(#gF2)" stroke="#8c6a1c" stroke-width="1" stroke-linejoin="round"/>
<path d="M542.5,548.3 H550.5" stroke="#a8822e" stroke-width="1"/>
<rect x="730" y="546" width="2" height="2" fill="#000080"/>
<g><rect x="309.600" y="556.4" width="11" height="15.200" fill="url(#gFo)" stroke="#f0c44e" stroke-width=".9"/><rect x="319.700" y="565.3" width="2" height="6.300" fill="#ffdb78" stroke="#ecbe48" stroke-width=".7"/></g>
<rect x="291.5" y="560.5" width="8" height="8" rx="1" fill="#fbfbfb" stroke="#9b9b9b" stroke-width="1"/>
<rect x="293" y="564" width="5" height="1" fill="#2b3f96"/>
<rect x="295" y="562" width="1" height="5" fill="#2b3f96"/>
<path d="M527.200,564.3 L529.800,567.3 L535.400,560.7" fill="none" stroke="#0b610b" stroke-width="2.100"/>
<path d="M542.5,565 V556.5 H547.5 L548.7,558.0 H554.5 V565 Z" fill="url(#gF2)" stroke="#8c6a1c" stroke-width="1" stroke-linejoin="round"/>
<path d="M545.5,560.3 H553.5" stroke="#a8822e" stroke-width="1"/>
<path d="M539.5,570.5 V561.5 H544.5 L545.7,563.0 H551.5 V570.5 Z" fill="url(#gF2)" stroke="#8c6a1c" stroke-width="1" stroke-linejoin="round"/>
<path d="M542.5,565.3 H550.5" stroke="#a8822e" stroke-width="1"/>
<rect x="730" y="563" width="2" height="2" fill="#000080"/>
<g opacity=".5"><rect x="309.600" y="573.4" width="11" height="15.200" fill="url(#gFo)" stroke="#f0c44e" stroke-width=".9"/><rect x="319.700" y="582.3" width="2" height="6.300" fill="#ffdb78" stroke="#ecbe48" stroke-width=".7"/></g>
<rect x="291.5" y="577.5" width="8" height="8" rx="1" fill="#fbfbfb" stroke="#9b9b9b" stroke-width="1"/>
<rect x="293" y="581" width="5" height="1" fill="#2b3f96"/>
<rect x="295" y="579" width="1" height="5" fill="#2b3f96"/>
<rect x="530" y="580" width="2" height="2" fill="#8888c8"/>
<rect x="730" y="580" width="2" height="2" fill="#8888c8"/>
<path d="M309.600,590.7 H317.600 L320.400,593.5 V605.4 H309.600 Z" fill="#fff" stroke="#8a8a8a" stroke-width="1" stroke-linejoin="round"/>
<path d="M317.600,590.7 V593.5 H320.400" fill="none" stroke="#8a8a8a" stroke-width=".8"/>
<rect x="311.500" y="593.3" width="4.5" height="1" fill="#a9a9a9"/>
<rect x="311.500" y="595.3" width="7.5" height="1" fill="#a9a9a9"/>
<rect x="311.500" y="597.3" width="7.5" height="1" fill="#a9a9a9"/>
<rect x="311.500" y="599.3" width="7.5" height="1" fill="#a9a9a9"/>
<rect x="311.500" y="601.3" width="7.5" height="1" fill="#a9a9a9"/>
<rect x="311.500" y="603.3" width="7.5" height="1" fill="#a9a9a9"/>
<path d="M527.200,598.3 L529.800,601.3 L535.400,594.7" fill="none" stroke="#0b610b" stroke-width="2.100"/>
<circle cx="731" cy="598" r="4.800" fill="#5cb227"/>
<path d="M307.600,611.5 Q307.600,608.5 309.600,608.5 H320.400 Q322.400,608.5 322.400,611.5 V621.3 Q322.400,623.3 320.400,623.3 H309.600 Q307.600,623.3 307.600,621.3 Z" fill="url(#gBox)" stroke="#5a88b8" stroke-width="1"/>
<path d="M308,611.3 H322" stroke="#5a88b8" stroke-width=".9"/><path d="M315,608.5 V611.3" stroke="#5a88b8" stroke-width=".9"/>
<rect x="308.300" y="609" width="13.400" height="2" fill="#e8f1fa"/>
<rect x="310.5" y="612" width="1" height="10.500" fill="#fff" opacity=".5"/>
<rect x="313" y="612" width="1" height="10.500" fill="#fff" opacity=".5"/>
<rect x="316.5" y="612" width="1" height="10.500" fill="#fff" opacity=".5"/>
<rect x="319" y="612" width="1" height="10.500" fill="#fff" opacity=".5"/>
<rect x="311.800" y="614.7" width="6.400" height="1.700" fill="#5a626c"/>
<path d="M526.500,611.5 H532.500 L535,614 V621.5 H526.500 Z" fill="#fff" stroke="#6a8ae4" stroke-width="1" stroke-linejoin="round"/>
<path d="M527.500,622.2 H535.700 V614.5" fill="none" stroke="#5a5a98" stroke-width="1"/>
<rect x="528" y="614.8" width="5" height="1" fill="#8a8a8a"/>
<rect x="528" y="616.8" width="5" height="1" fill="#8a8a8a"/>
<rect x="528" y="618.8" width="5" height="1" fill="#8a8a8a"/>
<circle cx="731" cy="615" r="4.800" fill="#5cb227"/>
<path d="M730.500,396.300 V412.600 L734.400,409.200 L737,414.600 L739.600,413.500 L737.300,408.400 H741.800 Z" fill="#fff" stroke="#0a0a14" stroke-width="1" stroke-linejoin="round"/>
</svg>
<div class="x tab" style="left:32.3px;top:8px;letter-spacing:-0.10px">HOME</div>
<div class="x tab" style="left:129.3px;top:8px;transform:scaleX(0.873)">PLOTS</div>
<div class="x tab" style="left:225.0px;top:8px;transform:scaleX(0.835)">APPS</div>
<div class="x tabsel" style="left:314.0px;top:8px;transform:scaleX(0.855)">PROJECT</div>
<div class="x tab" style="left:423.6px;top:8px;transform:scaleX(0.899)">PROJECT SHORTCUTS</div>
<div class="x sdoc" style="left:863.6px;top:7px;transform:scaleX(0.906)">Search Documentation</div>
<div class="x sign" style="left:1087.3px;top:7px;transform:scaleX(0.892)">Sign</div>
<div class="x rb" style="left:10.4px;top:68px;letter-spacing:-0.20px">New</div>
<div class="x rb" style="left:48.2px;top:68px;letter-spacing:-0.28px">Open</div>
<div class="x rb" style="left:92.5px;top:68px;letter-spacing:-0.18px">Add</div>
<div class="x rb" style="left:91.8px;top:84px;transform:scaleX(0.868)">Files</div>
<div class="x rb" style="left:129.2px;top:68px;transform:scaleX(0.933)">Unsaved</div>
<div class="x rb" style="left:129.2px;top:84px;transform:scaleX(0.943)">Changes</div>
<div class="x rb" style="left:187.3px;top:68px;transform:scaleX(0.896)">Share</div>
<div class="x rb" style="left:233.0px;top:68px;transform:scaleX(0.907)">Search</div>
<div class="x rb" style="left:280.5px;top:68px;letter-spacing:-0.07px">Custom</div>
<div class="x rb" style="left:283.0px;top:84px;transform:scaleX(0.890)">Tasks</div>
<div class="x rb" style="left:347.4px;top:68px;transform:scaleX(0.936)">Run</div>
<div class="x rb" style="left:334.5px;top:84px;transform:scaleX(0.917)">Checks</div>
<div class="x rb" style="left:398.3px;top:68px;transform:scaleX(0.919)">References</div>
<div class="x rb" style="left:467.4px;top:68px;transform:scaleX(0.943)">Details</div>
<div class="x rb" style="left:534.0px;top:48px;letter-spacing:-0.17px">Project Path</div>
<div class="x rb" style="left:534.0px;top:72px;letter-spacing:-0.07px">Startup Shutdown</div>
<div class="x rb" style="left:656.6px;top:68px;transform:scaleX(0.913)">Git</div>
<div class="x rb" style="left:646.2px;top:84px;transform:scaleX(0.949)">Details</div>
<div class="x rb" style="left:693.3px;top:68px;transform:scaleX(0.909)">Refresh</div>
<div class="x rb" style="left:744.7px;top:68px;letter-spacing:0.39px">Commit</div>
<div class="x rb" style="left:820.3px;top:36px;transform:scaleX(0.950)">Fetch</div>
<div class="x rb" style="left:820.3px;top:60px;transform:scaleX(0.925)">Push</div>
<div class="x rb" style="left:820.3px;top:84px;transform:scaleX(0.935)">Pull</div>
<div class="x rb" style="left:881.2px;top:48px;transform:scaleX(0.962)">Remote</div>
<div class="x rb" style="left:881.2px;top:72px;transform:scaleX(0.937)">Branches</div>
<div class="x rb" style="left:961.0px;top:48px;letter-spacing:-0.12px">Submodules</div>
<div class="x rb" style="left:961.0px;top:72px;transform:scaleX(0.899)">Stashes</div>
<div class="x sec" style="left:100.4px;top:104px;transform:scaleX(0.818)">FILE</div>
<div class="x sec" style="left:288.5px;top:104px;transform:scaleX(0.919)">TOOLS</div>
<div class="x sec" style="left:473.5px;top:104px;transform:scaleX(0.941)">ENVIRONMENT</div>
<div class="x sec" style="left:786.0px;top:104px;transform:scaleX(0.934)">SOURCE CONTROL</div>
<div class="x ad" style="left:158.0px;top:126px;transform:scaleX(0.867)">C:</div>
<div class="x ad" style="left:191.0px;top:126px;transform:scaleX(0.952)">workSpace</div>
<div class="x ad" style="left:270.2px;top:126px;transform:scaleX(0.970)">examples</div>
<div class="x ad" style="left:342.6px;top:126px;letter-spacing:-0.16px">airframeConvertToSlx</div>
<div class="x ttl" style="left:27.2px;top:148px;letter-spacing:-0.02px">Project - SimulinkProjectAirframeExample</div>
<div class="x t" style="left:26.2px;top:170px;transform:scaleX(0.934)">Views</div>
<div class="x tw" style="left:47.3px;top:193px;transform:scaleX(0.884)">Files</div>
<div class="x t" style="left:47.3px;top:215px;letter-spacing:-0.18px">Dependency Analysis</div>
<div class="x t" style="left:26.3px;top:332px;transform:scaleX(0.925)">Labels</div>
<div class="x t" style="left:63.4px;top:355px;letter-spacing:-0.11px">Classification</div>
<div class="x t" style="left:26.3px;top:512px;transform:scaleX(0.906)">Git</div>
<div class="x t" style="left:27.6px;top:534px;letter-spacing:-0.11px">Current branch: master</div>
<div class="x t" style="left:27.6px;top:550px;letter-spacing:-0.14px">Branch status: Normal</div>
<div class="x t" style="left:27.6px;top:566px;letter-spacing:0.01px">No remote tracking branch</div>
<div class="x t" style="left:293.0px;top:632px;transform:scaleX(0.924)">Details</div>
<div class="x all" style="left:292.0px;top:170px;transform:scaleX(0.893)">All</div>
<div class="x t" style="left:320.3px;top:170px;transform:scaleX(0.954)">Project (31)</div>
<div class="x t" style="left:400.5px;top:170px;letter-spacing:0.06px">Modified (3)</div>
<div class="x t" style="left:977.5px;top:171px;transform:scaleX(0.960)">Layout:</div>
<div class="x t" style="left:1026.3px;top:171px;transform:scaleX(0.896)">Tree</div>
<div class="x t" style="left:327.4px;top:197px;letter-spacing:-0.27px">Name</div>
<div class="x t" style="left:524.0px;top:197px;transform:scaleX(0.941)">Status</div>
<div class="x t" style="left:724.4px;top:197px;letter-spacing:-0.17px">Git</div>
<div class="x t" style="left:919.8px;top:197px;letter-spacing:-0.15px">Classification</div>
<div class="x tip" style="left:747.7px;top:406px;letter-spacing:-0.11px">Missing</div>
<div class="x t" style="left:327.4px;top:217px;transform:scaleX(0.961)">custom_tasks</div>
<div class="x t" style="left:327.4px;top:234px;transform:scaleX(0.955)">data</div>
<div class="x t" style="left:327.4px;top:251px;letter-spacing:0.05px">lib</div>
<div class="x t" style="left:327.4px;top:268px;letter-spacing:-0.04px">models</div>
<div class="x t" style="left:343.2px;top:285px;letter-spacing:0.15px">AnalogControl.mdl</div>
<div class="x t" style="left:343.2px;top:302px;letter-spacing:-0.01px">AnalogControl.mdl.r2019b</div>
<div class="x t" style="left:343.2px;top:319px;letter-spacing:-0.00px">AnalogControl.slx</div>
<div class="x t" style="left:343.9px;top:336px;letter-spacing:-0.04px">DigitalControl.slx</div>
<div class="x t" style="left:343.2px;top:353px;transform:scaleX(0.949)">f14_airframe.slx</div>
<div class="x t" style="left:343.9px;top:370px;letter-spacing:-0.12px">LinearActuator.slx</div>
<div class="x t" style="left:343.9px;top:387px;letter-spacing:0.07px">NonLinearActuator.mdl</div>
<div class="x t" style="left:343.9px;top:404px;letter-spacing:-0.05px">NonLinearActuator.mdl.r2019b</div>
<div class="x t" style="left:343.9px;top:421px;letter-spacing:-0.07px">NonLinearActuator.slx</div>
<div class="x t" style="left:343.2px;top:438px;transform:scaleX(0.950)">slproject_f14.slx</div>
<div class="x t" style="left:343.2px;top:455px;transform:scaleX(0.964)">vertical_channel.slx</div>
<div class="x t" style="left:343.2px;top:472px;transform:scaleX(0.969)">wind_gust_lib.slx</div>
<div class="x tg" style="left:327.3px;top:489px;letter-spacing:-0.12px">reports</div>
<div class="x tg" style="left:327.3px;top:506px;transform:scaleX(0.943)">resources</div>
<div class="x t" style="left:327.3px;top:523px;transform:scaleX(0.900)">src</div>
<div class="x t" style="left:327.3px;top:540px;transform:scaleX(0.935)">tests</div>
<div class="x t" style="left:327.3px;top:557px;letter-spacing:0.12px">utilities</div>
<div class="x tg" style="left:327.3px;top:574px;letter-spacing:0.12px">work</div>
<div class="x t" style="left:327.3px;top:591px;letter-spacing:0.09px">.gitattributes</div>
<div class="x t" style="left:327.3px;top:608px;letter-spacing:-0.05px">SimulinkProjectAirframeExample.prj</div>
<div class="x t" style="left:915.6px;top:285px;transform:scaleX(0.948)">Design</div>
<div class="x t" style="left:915.6px;top:336px;transform:scaleX(0.948)">Design</div>
<div class="x t" style="left:915.6px;top:353px;transform:scaleX(0.948)">Design</div>
<div class="x t" style="left:915.6px;top:370px;transform:scaleX(0.948)">Design</div>
<div class="x t" style="left:915.6px;top:387px;transform:scaleX(0.948)">Design</div>
<div class="x t" style="left:915.6px;top:438px;transform:scaleX(0.948)">Design</div>
<div class="x t" style="left:915.6px;top:455px;transform:scaleX(0.948)">Design</div>
<div class="x t" style="left:915.6px;top:472px;transform:scaleX(0.948)">Design</div>
</body></html>
